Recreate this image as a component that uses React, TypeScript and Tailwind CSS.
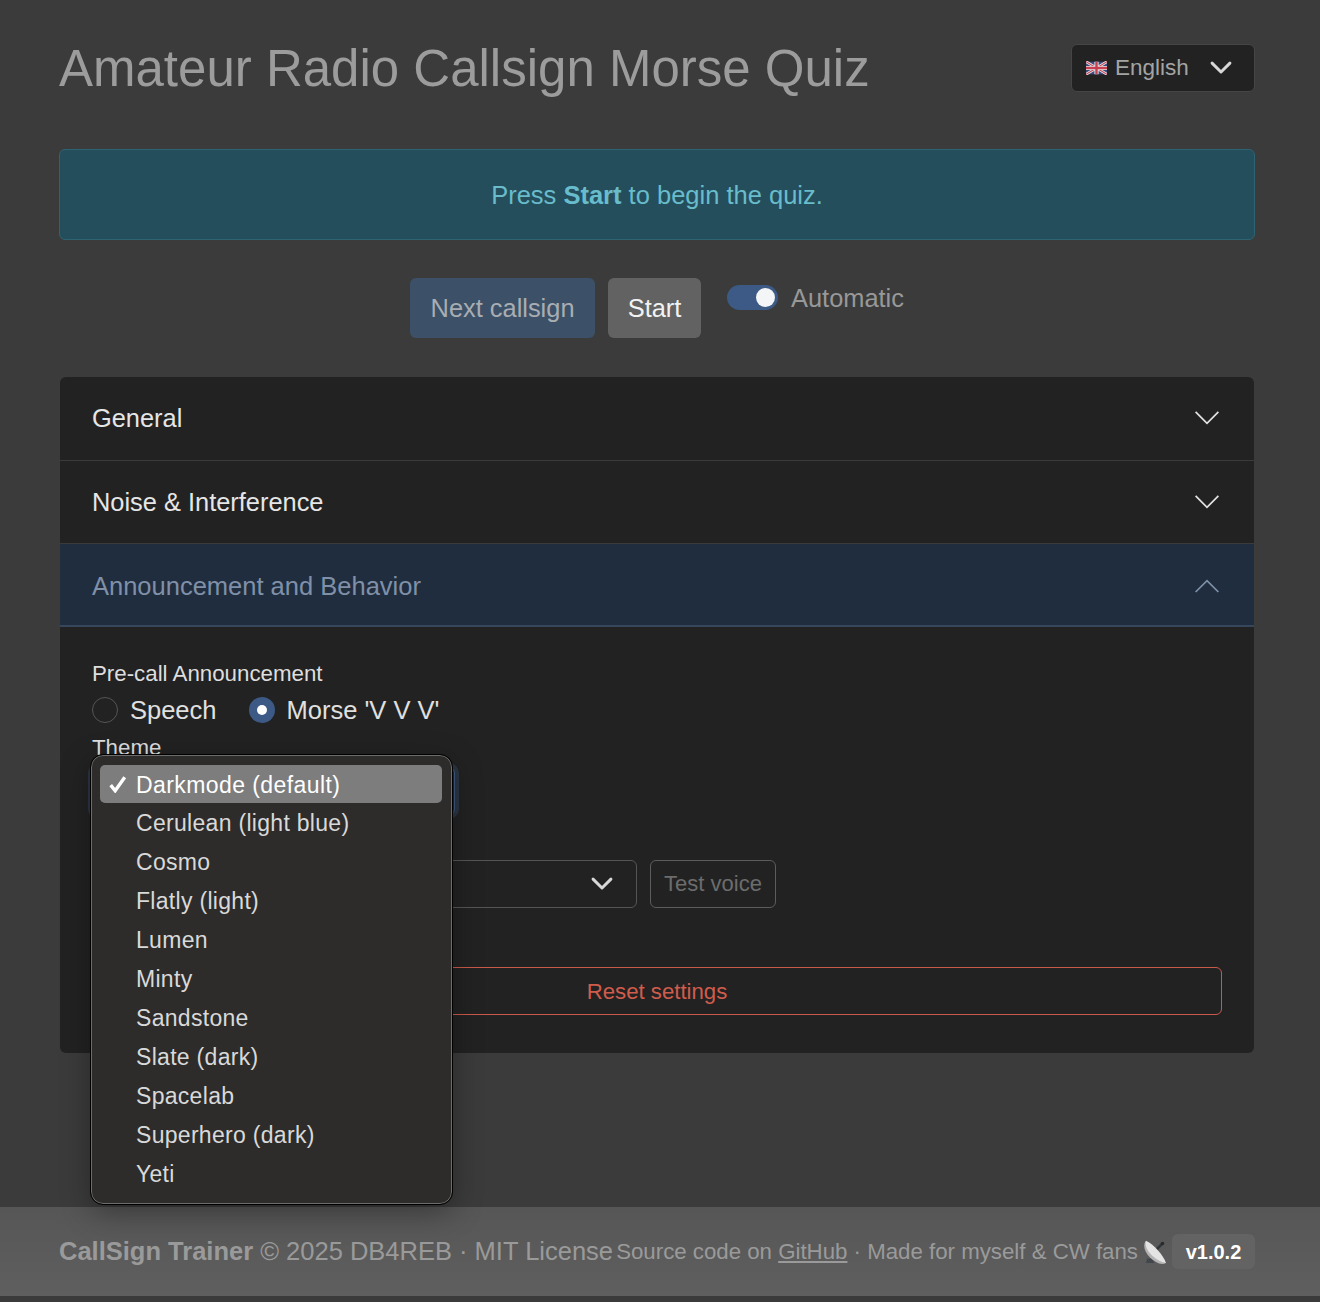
import React from 'react';

const themes = [
  'Cerulean (light blue)',
  'Cosmo',
  'Flatly (light)',
  'Lumen',
  'Minty',
  'Sandstone',
  'Slate (dark)',
  'Spacelab',
  'Superhero (dark)',
  'Yeti',
];

function Chevron({ up, className }: { up?: boolean; className: string }) {
  return (
    <svg viewBox="0 0 16 16" fill="none" stroke="currentColor" className={className}>
      <path d={up ? 'M1.5 12 8 5.500l6.500 6.500' : 'M1.5 4.500 8 11l6.500-6.500'} />
    </svg>
  );
}

function SelectChevron() {
  return (
    <svg viewBox="0 0 16 16" fill="none" stroke="currentColor" strokeWidth="1.8" strokeLinecap="round" strokeLinejoin="round" className="w-[26px] h-[26px] text-[#d8d8d8]">
      <path d="m2.500 5 5.500 5.500L13.500 5" />
    </svg>
  );
}

function UkFlag() {
  return (
    <svg viewBox="0 0 60 36" className="w-[21px] h-[14px]">
      <rect width="60" height="36" fill="#3d4a7a" />
      <path d="M0 0 60 36M60 0 0 36" stroke="#e4e4e8" strokeWidth="8" />
      <path d="M0 0 60 36M60 0 0 36" stroke="#c8404f" strokeWidth="3" />
      <path d="M30 0v36M0 18h60" stroke="#e4e4e8" strokeWidth="12" />
      <path d="M30 0v36M0 18h60" stroke="#c8404f" strokeWidth="7" />
    </svg>
  );
}

function Dish() {
  return (
    <svg viewBox="0 0 24 24" className="w-6 h-6">
      <path d="M4 18.500 3 23h8l-1-4.500z" fill="#41464c" />
      <path d="m12 11 7-7" stroke="#33363a" strokeWidth="2.500" />
      <circle cx="19.500" cy="3.500" r="1.800" fill="#2a2a2a" />
      <path d="M2.500 1C-.5 6 2 12.500 7 17.500s11 8 16 5.500z" fill="#b4b4b4" />
      <path d="M3 .8C1.500 5 4 10.500 9 15.500c5 4.500 10 7 14 7.500C20 15 11.500 5 3 .8z" fill="#e4e4e4" />
    </svg>
  );
}

function AccordionRow({ title, nudge }: { title: string; nudge?: boolean }) {
  return (
    <div className="h-[83.5px] pl-8 pr-[33.500px] flex items-center justify-between text-[25.400px] text-[#e6e6e6] border-b border-[#3b3b3b]">
      <span className={nudge ? 'pt-px' : ''}>{title}</span>
      <Chevron className="w-7 h-7 text-[#e2e2e2]" />
    </div>
  );
}

export default function App() {
  return (
    <div className="min-h-[1302px] bg-[#3b3b3b] flex flex-col font-['Liberation_Sans',Arial,sans-serif] pb-[6px]">
      <main className="pl-[59px] pr-[65px] pt-[44px] flex-1">
        <header className="flex items-center justify-between h-[48px]">
          <h1 className="text-[51px] leading-[48px] pt-[2px] text-[#9c9c9c]">Amateur Radio Callsign Morse Quiz</h1>
          <div className="w-[184px] h-[48px] rounded-[6px] bg-[#222222] border border-[#454545] pl-[14px] pr-[20px] flex items-center gap-2 text-[#a4a4a4] text-[22.500px]">
            <UkFlag />
            <span className="flex-1">English</span>
            <SelectChevron />
          </div>
        </header>

        <div className="mt-[57px] h-[91px] rounded-[6px] bg-[#254e5c] border border-[#2c6473] flex items-center justify-center text-[25.500px] text-[#68bccb]">
          <span className="pt-px">Press <strong>Start</strong> to begin the quiz.</span>
        </div>

        <div className="mt-[38px] flex justify-center items-start">
          <button className="w-[185px] h-[60px] pt-px rounded-[6px] bg-[#3c5068] text-[25.400px] text-[#a8adb2]">Next callsign</button>
          <button className="ml-[13px] w-[93px] h-[60px] pt-px rounded-[6px] bg-[#626262] text-[25.400px] text-[#f2f2f2]">Start</button>
          <div className="ml-[26px] mt-[7px] w-[51px] h-[25px] rounded-full bg-[#3c5a85] flex items-center justify-end pr-[3px]">
            <span className="w-[19px] h-[19px] rounded-full bg-[#f4f5f7]" />
          </div>
          <span className="ml-[13px] mt-[3px] text-[25.400px] leading-[34px] text-[#989898]">Automatic</span>
        </div>

        <section className="mt-[39px] mx-px rounded-[6px] bg-[#222222]">
          <AccordionRow title="General" />
          <AccordionRow title="Noise & Interference" nudge />
          <div className="h-[83px] pl-8 pr-[33.500px] flex items-center justify-between text-[25.500px] text-[#7f90a8] bg-[#202d3e] border-b-2 border-[#36465c]">
            <span className="pt-[4px]">Announcement and Behavior</span>
            <Chevron up className="w-7 h-7 text-[#7f90a8]" />
          </div>

          <div className="px-8 pt-[30px] pb-[38px]">
            <div className="text-[22.300px] leading-[34px] text-[#dedede]">Pre-call Announcement</div>
            <div className="mt-[2px] flex items-center h-[34px] text-[25.500px] text-[#e0e0e0]">
              <span className="w-[26px] h-[26px] rounded-full border border-[#555555] bg-[#222222]" />
              <span className="ml-3">Speech</span>
              <span className="ml-8 w-[26px] h-[26px] rounded-full bg-[#3c5a85] flex items-center justify-center">
                <span className="w-[10px] h-[10px] rounded-full bg-white" />
              </span>
              <span className="ml-3">Morse 'V V V'</span>
            </div>
            <div className="mt-[4px] text-[22.300px] leading-[34px] text-[#dedede]">Theme</div>

            <div className="relative mt-[2px]">
              <div className="w-[363px] h-[48px] rounded-[6px] bg-[#222222] border border-[#3f5b85] shadow-[0_0_0_4px_#2b3644]" />

              <div className="absolute left-[-1px] top-[-12px] z-10 w-[361px] h-[449px] rounded-[12px] bg-[#2d2c2b] border border-[#6d6d6b] outline outline-black shadow-[0_8px_30px_rgba(0,0,0,0.35)] pl-[8px] pr-[9px] py-[9px] text-[23px] tracking-[0.3px] text-[#d9d9d9]">
                <div className="h-[38px] rounded-[5px] bg-[#7d7d7d] flex items-center text-white">
                  <svg viewBox="0 0 16 16" className="ml-[9px] w-[18px] h-[18px]" fill="none" stroke="white" strokeWidth="3">
                    <path d="m1.500 9 4 5 8.500-12" />
                  </svg>
                  <span className="ml-[9px] pt-[2px] tracking-[0.42px]">Darkmode (default)</span>
                </div>
                <ul>
                  {themes.map((t) => (
                    <li key={t} className="h-[39px] pl-[36px] flex items-center first:mt-px">{t}</li>
                  ))}
                </ul>
              </div>
            </div>

            <div className="mt-[45px] flex items-center gap-[13px]">
              <div className="w-[545px] h-[48px] rounded-[6px] border border-[#555555] pr-[21px] flex items-center justify-end">
                <SelectChevron />
              </div>
              <button className="w-[126px] h-[48px] pb-px rounded-[6px] border border-[#5c5c5c] text-[22px] text-[#6c6c6c]">Test voice</button>
            </div>

            <button className="mt-[59px] w-full h-[48px] pt-px rounded-[6px] border border-[#c9594a] text-[22.200px] text-[#d05c4c]">Reset settings</button>
          </div>
        </section>
      </main>

      <footer className="h-[89px] pl-[59px] pr-[65px] bg-linear-to-b from-[#565656] to-[#5f5f5f] flex items-center justify-between text-[#9a9a9a]">
        <div className="text-[25.500px] whitespace-nowrap">
          <strong>CallSign Trainer</strong> © 2025 DB4REB · MIT License
        </div>
        <div className="flex items-center text-[22.250px] whitespace-nowrap">
          <span>Source code on <a className="underline">GitHub</a> · Made for myself &amp; CW fans</span>
          <span className="ml-[5px]"><Dish /></span>
          <span className="ml-[5px] w-[83px] h-[35px] rounded-[6px] bg-[#636363] flex items-center justify-center text-[20px] font-bold text-white">v1.0.2</span>
        </div>
      </footer>
    </div>
  );
}
